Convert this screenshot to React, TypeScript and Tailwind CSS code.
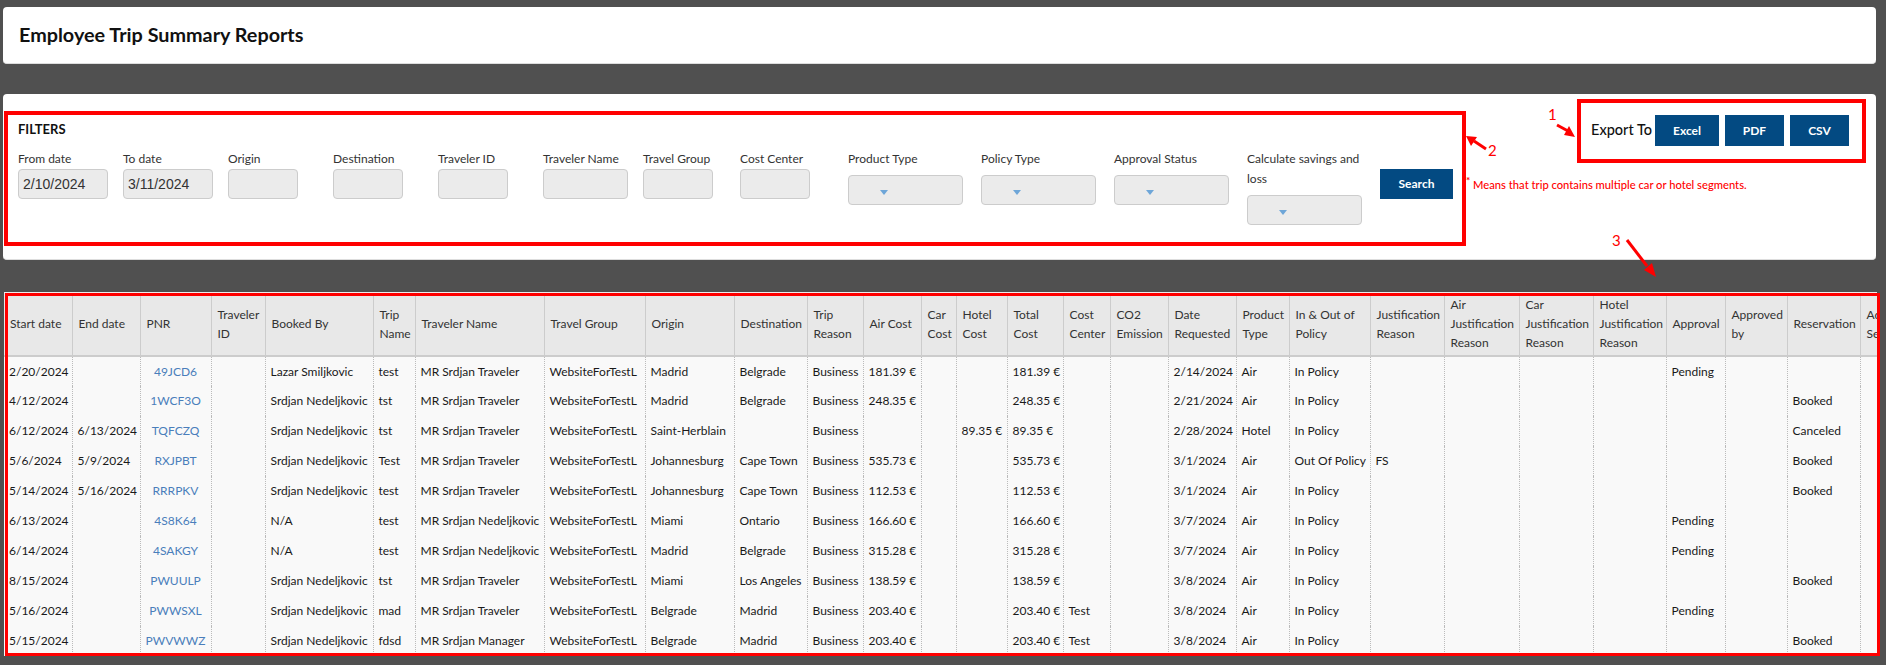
const fields = [
  { label: 'From date', col: 'w-[105px]', input: 'w-[90px]', value: '2/10/2024' },
  { label: 'To date', col: 'w-[105px]', input: 'w-[90px]', value: '3/11/2024' },
  { label: 'Origin', col: 'w-[105px]', input: 'w-[70px]', value: '' },
  { label: 'Destination', col: 'w-[105px]', input: 'w-[70px]', value: '' },
  { label: 'Traveler ID', col: 'w-[105px]', input: 'w-[70px]', value: '' },
  { label: 'Traveler Name', col: 'w-[100px]', input: 'w-[85px]', value: '' },
  { label: 'Travel Group', col: 'w-[97px]', input: 'w-[70px]', value: '' },
  { label: 'Cost Center', col: 'w-[108px]', input: 'w-[70px]', value: '' },
]

const selects = ['Product Type', 'Policy Type', 'Approval Status', 'Calculate savings and loss']

const columns = [
  { title: 'Start date', w: 'w-[68px]' },
  { title: 'End date', w: 'w-[68px]' },
  { title: 'PNR', w: 'w-[71px]' },
  { title: 'Traveler ID', w: 'w-[54px]' },
  { title: 'Booked By', w: 'w-[108px]' },
  { title: 'Trip Name', w: 'w-[42px]' },
  { title: 'Traveler Name', w: 'w-[129px]' },
  { title: 'Travel Group', w: 'w-[101px]' },
  { title: 'Origin', w: 'w-[89px]' },
  { title: 'Destination', w: 'w-[73px]' },
  { title: 'Trip Reason', w: 'w-[56px]' },
  { title: 'Air Cost', w: 'w-[58px]' },
  { title: 'Car Cost', w: 'w-[35px]' },
  { title: 'Hotel Cost', w: 'w-[51px]' },
  { title: 'Total Cost', w: 'w-[56px]' },
  { title: 'Cost Center', w: 'w-[47px]' },
  { title: 'CO2 Emission', w: 'w-[58px]' },
  { title: 'Date Requested', w: 'w-[68px]' },
  { title: 'Product Type', w: 'w-[53px]' },
  { title: 'In & Out of Policy', w: 'w-[81px]' },
  { title: 'Justification Reason', w: 'w-[74px]' },
  { title: 'Air Justification Reason', w: 'w-[75px]' },
  { title: 'Car Justification Reason', w: 'w-[74px]' },
  { title: 'Hotel Justification Reason', w: 'w-[73px]' },
  { title: 'Approval', w: 'w-[59px]' },
  { title: 'Approved by', w: 'w-[62px]' },
  { title: 'Reservation', w: 'w-[73px]' },
  { title: 'Additional Services', w: 'w-[70px]' },
]

const rows = [
  ['2/20/2024', '', '49JCD6', '', 'Lazar Smiljkovic', 'test', 'MR Srdjan Traveler', 'WebsiteForTestL', 'Madrid', 'Belgrade', 'Business', '181.39 €', '', '', '181.39 €', '', '', '2/14/2024', 'Air', 'In Policy', '', '', '', '', 'Pending', '', '', ''],
  ['4/12/2024', '', '1WCF3O', '', 'Srdjan Nedeljkovic', 'tst', 'MR Srdjan Traveler', 'WebsiteForTestL', 'Madrid', 'Belgrade', 'Business', '248.35 €', '', '', '248.35 €', '', '', '2/21/2024', 'Air', 'In Policy', '', '', '', '', '', '', 'Booked', ''],
  ['6/12/2024', '6/13/2024', 'TQFCZQ', '', 'Srdjan Nedeljkovic', 'tst', 'MR Srdjan Traveler', 'WebsiteForTestL', 'Saint-Herblain', '', 'Business', '', '', '89.35 €', '89.35 €', '', '', '2/28/2024', 'Hotel', 'In Policy', '', '', '', '', '', '', 'Canceled', ''],
  ['5/6/2024', '5/9/2024', 'RXJPBT', '', 'Srdjan Nedeljkovic', 'Test', 'MR Srdjan Traveler', 'WebsiteForTestL', 'Johannesburg', 'Cape Town', 'Business', '535.73 €', '', '', '535.73 €', '', '', '3/1/2024', 'Air', 'Out Of Policy', 'FS', '', '', '', '', '', 'Booked', ''],
  ['5/14/2024', '5/16/2024', 'RRRPKV', '', 'Srdjan Nedeljkovic', 'test', 'MR Srdjan Traveler', 'WebsiteForTestL', 'Johannesburg', 'Cape Town', 'Business', '112.53 €', '', '', '112.53 €', '', '', '3/1/2024', 'Air', 'In Policy', '', '', '', '', '', '', 'Booked', ''],
  ['6/13/2024', '', '4S8K64', '', 'N/A', 'test', 'MR Srdjan Nedeljkovic', 'WebsiteForTestL', 'Miami', 'Ontario', 'Business', '166.60 €', '', '', '166.60 €', '', '', '3/7/2024', 'Air', 'In Policy', '', '', '', '', 'Pending', '', '', ''],
  ['6/14/2024', '', '4SAKGY', '', 'N/A', 'test', 'MR Srdjan Nedeljkovic', 'WebsiteForTestL', 'Madrid', 'Belgrade', 'Business', '315.28 €', '', '', '315.28 €', '', '', '3/7/2024', 'Air', 'In Policy', '', '', '', '', 'Pending', '', '', ''],
  ['8/15/2024', '', 'PWUULP', '', 'Srdjan Nedeljkovic', 'tst', 'MR Srdjan Traveler', 'WebsiteForTestL', 'Miami', 'Los Angeles', 'Business', '138.59 €', '', '', '138.59 €', '', '', '3/8/2024', 'Air', 'In Policy', '', '', '', '', '', '', 'Booked', ''],
  ['5/16/2024', '', 'PWWSXL', '', 'Srdjan Nedeljkovic', 'mad', 'MR Srdjan Traveler', 'WebsiteForTestL', 'Belgrade', 'Madrid', 'Business', '203.40 €', '', '', '203.40 €', 'Test', '', '3/8/2024', 'Air', 'In Policy', '', '', '', '', 'Pending', '', '', ''],
  ['5/15/2024', '', 'PWVWWZ', '', 'Srdjan Nedeljkovic', 'fdsd', 'MR Srdjan Manager', 'WebsiteForTestL', 'Belgrade', 'Madrid', 'Business', '203.40 €', '', '', '203.40 €', 'Test', '', '3/8/2024', 'Air', 'In Policy', '', '', '', '', '', '', 'Booked', ''],
]

function Annotations() {
  return (
    <>
      {/* red review boxes drawn over the screenshot */}
      <div className="absolute left-[4px] top-[111px] w-[1462px] h-[135px] border-4 border-[#ff0000]" />
      <div className="absolute left-[1577px] top-[99px] w-[289px] h-[64px] border-4 border-[#ff0000]" />
      <div className="absolute left-[5px] top-[293px] w-[1875px] h-[363px] border-[3px] border-[#ff0000]" />
      <span className="absolute left-[1548px] top-[104px] text-[15px] leading-[20px] text-[#ff0000]">1</span>
      <span className="absolute left-[1488px] top-[140px] text-[15px] leading-[20px] text-[#ff0000]">2</span>
      <span className="absolute left-[1612px] top-[230px] text-[15px] leading-[20px] text-[#ff0000]">3</span>
      <svg className="absolute left-0 top-0" width="1886" height="665" fill="#ff0000" stroke="none">
        <path d="M1557 125 L1568 131" stroke="#ff0000" strokeWidth="3" />
        <path d="M1575 137 L1564 135 L1569 126 Z" />
        <path d="M1486 149 L1474 141" stroke="#ff0000" strokeWidth="3" />
        <path d="M1466 136 L1477 137 L1471 146 Z" />
        <path d="M1627 240 L1647 266" stroke="#ff0000" strokeWidth="3" />
        <path d="M1656 277 L1644 270 L1652 263 Z" />
      </svg>
    </>
  )
}

export default function App() {
  return (
    <div className="relative h-[665px] overflow-hidden bg-[#505050] pt-[7px] pl-[3px] pr-[10px] font-['Lato',sans-serif] text-[12px] text-[#333]">
      <div className="h-[57px] flex items-center pl-[16px] bg-white rounded-[4px] border-b border-[#ddd]">
        <h1 className="text-[19.8px] font-bold text-[#111]">Employee Trip Summary Reports</h1>
      </div>

      <div className="mt-[30px] h-[166px] pl-[15px] pt-[21px] pr-[27px] bg-white rounded-[4px] border-b border-[#ddd]">
        <div className="h-[31px] flex items-center justify-between">
          <h2 className="mb-[1px] text-[13px] font-bold text-[#111]">FILTERS</h2>
          <div className="flex items-center">
            <span className="mr-[3px] mb-[1px] text-[14.5px] font-medium text-[#111]">Export To</span>
            <button className="w-[64px] h-[31px] bg-[#034a82] text-white text-[12px] font-bold">Excel</button>
            <button className="ml-[6px] w-[59px] h-[31px] bg-[#034a82] text-white text-[12px] font-bold">PDF</button>
            <button className="ml-[6px] w-[59px] h-[31px] bg-[#034a82] text-white text-[12px] font-bold">CSV</button>
          </div>
        </div>

        <div className="mt-[3px] flex items-start">
          {fields.map((f) => (
            <div key={f.label} className={f.col}>
              <div className="h-[20px] leading-[20px]">{f.label}</div>
              <div className={`${f.input} h-[30px] pl-[4px] flex items-center bg-[#ebebeb] border border-[#ccc] rounded-[4px] font-['Liberation_Sans',sans-serif] text-[14px]`}>
                {f.value}
              </div>
            </div>
          ))}
          {selects.map((s) => (
            <div key={s} className="w-[133px]">
              <div className="w-[115px] leading-[20px]">{s}</div>
              <div className="mt-[6px] w-[115px] h-[30px] pl-[31px] pt-[4px] flex items-center bg-[#ebebeb] border border-[#ccc] rounded-[4px]">
                <span className="w-0 h-0 border-x-[4px] border-t-[5px] border-x-transparent border-t-[#6ea6d8]" />
              </div>
            </div>
          ))}
          <button className="mt-[20px] w-[73px] h-[30px] bg-[#034a82] text-white text-[12px] font-bold">Search</button>
          <p className="ml-[13px] mt-[26px] leading-[20px] text-[11.2px] font-medium text-[#ff0000] whitespace-nowrap">
            <sup className="text-[10px] font-bold">*</sup> Means that trip contains multiple car or hotel segments.
          </p>
        </div>
      </div>

      <div className="mt-[32px] ml-[1px] w-[1873px] overflow-hidden border-t border-[#eee]">
        <table className="table-fixed w-[1926px] border-collapse">
          <colgroup>
            {columns.map((c) => (
              <col key={c.title} className={c.w} />
            ))}
          </colgroup>
          <thead>
            <tr className="h-[63px] bg-[#e8e8e8] border-b-2 border-[#ccc]">
              {columns.map((c) => (
                <th key={c.title} className="px-[6px] pb-[1px] text-left font-normal leading-[19px] border-r border-[#ccc]">
                  {c.title}
                </th>
              ))}
            </tr>
          </thead>
          <tbody>
            {rows.map((row) => (
              <tr key={row[2]} className="h-[30px] bg-[#f9f9f9]">
                {row.map((cell, i) => (
                  <td
                    key={i}
                    className={
                      i === 2
                        ? 'px-[5px] text-center whitespace-nowrap text-[#4a7ebb] border-r border-dotted border-[#bbb]'
                        : 'px-[5px] whitespace-nowrap text-[#1a1a1a] border-r border-dotted border-[#bbb]'
                    }
                  >
                    {cell}
                  </td>
                ))}
              </tr>
            ))}
          </tbody>
        </table>
      </div>

      <Annotations />
    </div>
  )
}
